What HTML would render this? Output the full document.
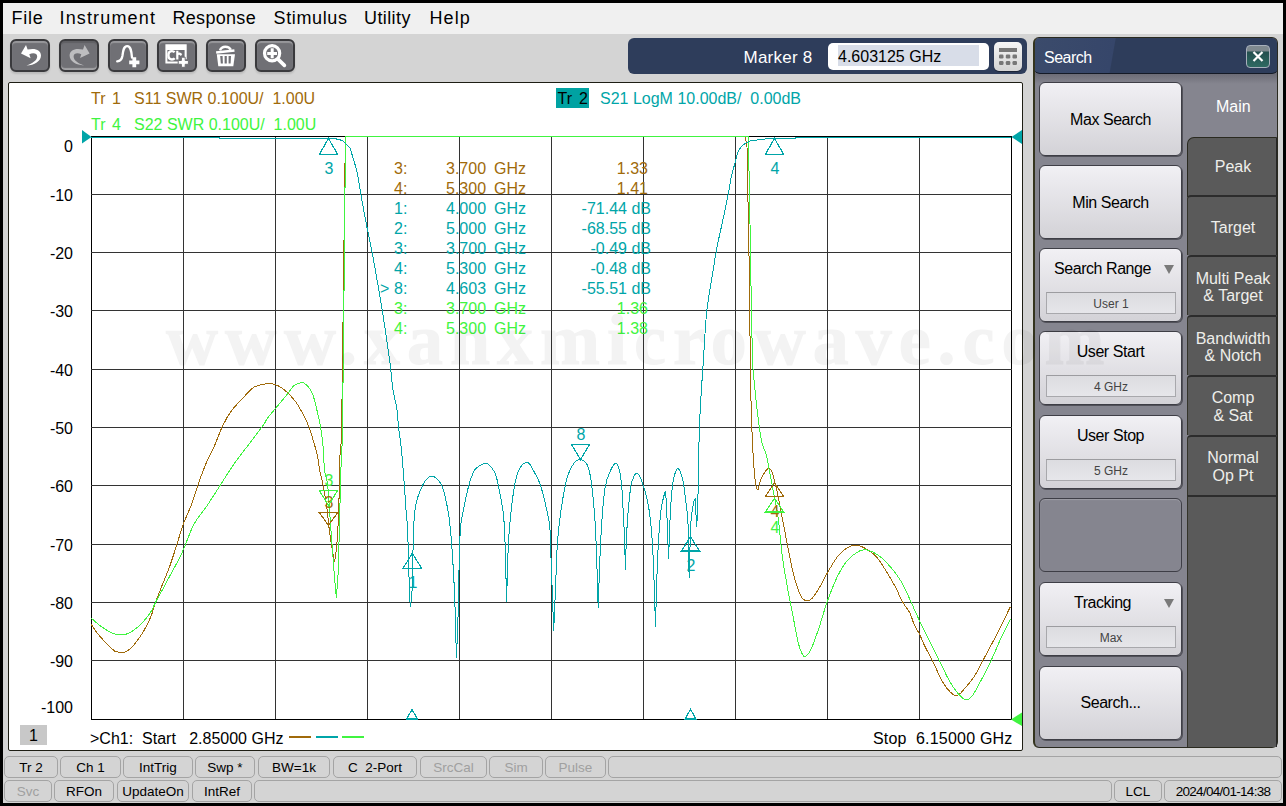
<!DOCTYPE html>
<html><head><meta charset="utf-8">
<style>
*{margin:0;padding:0;box-sizing:border-box}
html,body{width:1286px;height:806px;overflow:hidden;background:#000;font-family:"Liberation Sans",sans-serif}
.a{position:absolute;white-space:pre;line-height:1}
#win{position:absolute;left:3px;top:3px;width:1280px;height:800px;background:#d4d4d4}
#menu{position:absolute;left:3px;top:3px;width:1280px;height:31px;background:#f0f0f0}
.mi{font-size:18px;color:#000;top:9px}
.tb{position:absolute;top:39px;width:40px;height:33px;border-radius:6px;background:#707075;border:2px solid #3a3a3d;box-shadow:0 2px 2px rgba(0,0,0,0.12), inset 0 2px 1px rgba(255,255,255,0.28)}
.tb.dis{box-shadow:0 2px 2px rgba(0,0,0,0.12), inset 0 -2px 1px rgba(255,255,255,0.35), inset 0 2px 1px rgba(0,0,0,0.15)}

#chart{position:absolute;left:8px;top:82px;width:1015px;height:669px;background:#fff;border:1px solid #1e1e14;border-radius:2px}
.sb{position:absolute;height:22px;border:1px solid #a4a4a4;border-radius:5px;font-size:13.5px;text-align:center;line-height:21px;color:#000;white-space:pre}
.sb.dis{color:#a0a0a0}
#mk{position:absolute;left:628px;top:38px;width:399px;height:36px;background:#2e3d5b;border-radius:6px}
#sp{position:absolute;left:1033px;top:37px;width:245px;height:711px;border-radius:6px;background:linear-gradient(#6c6c76 36px,#85858f 46px);border:1px solid #2a2a20;border-left:2px solid #34341e;overflow:hidden}
#sptitle{position:absolute;left:-1px;top:0;width:244px;height:36px;border-radius:0 0 6px 6px;background:linear-gradient(100deg,#3b4b6b 0px,#36466a 80px,#2e3d5b 81px);border-bottom:1px solid #141a26}
.btn{position:absolute;left:1039px;width:143px;height:74px;border-radius:6px;background:linear-gradient(#f1f0f4,#d3d2d7);border:1px solid #3e3e46;box-shadow:1px 1px 0 rgba(40,40,48,.55);font-size:16px;color:#000}
.btn .t{position:absolute;left:0;width:141px;text-align:center;white-space:pre;line-height:1;letter-spacing:-0.45px}
.btn .sub{position:absolute;left:6px;top:43px;width:130px;height:22px;border:1px solid #a8a8ac;border-top-color:#9c9ca0;background:linear-gradient(#dcdce0,#e6e6ea);font-size:12px;color:#444;text-align:center;line-height:23px}
.btn .tri{position:absolute;left:124px;top:16px;width:0;height:0;border-left:5px solid transparent;border-right:5px solid transparent;border-top:9px solid #7a7a7a}
.tab{position:absolute;left:1187px;width:90px;height:60px;background:#5a5a5a;border-top:2px solid #2c2c2c;border-left:1px solid #34342a;border-right:1px solid #262626;border-radius:4px 0 0 0;color:#eeeeea;font-size:16px;line-height:17.5px}
.tt{position:absolute;left:0;width:90px;text-align:center;white-space:pre}
</style></head><body>
<div id="win"></div>
<div id="menu"></div>
<span class="a mi" style="left:11.5px;letter-spacing:0.75px">File</span>
<span class="a mi" style="left:59.5px;letter-spacing:1.15px">Instrument</span>
<span class="a mi" style="left:172.5px;letter-spacing:0.3px">Response</span>
<span class="a mi" style="left:273.5px;letter-spacing:0.64px">Stimulus</span>
<span class="a mi" style="left:364px;letter-spacing:0.4px">Utility</span>
<span class="a mi" style="left:429.5px;letter-spacing:1.1px">Help</span>

<!-- toolbar -->
<div class="tb" style="left:10px"><svg width="40" height="33" style="position:absolute;left:-2px;top:-2px"><path d="M16,6 L11,14.6 L20.6,19.2 L19.3,15.2 C23,13.6 27.2,14 27.2,17.6 C27.2,21.2 22.5,24.6 16.4,26.6 C24.5,26.4 31,22.2 31,16.6 C31,11 25,8.6 17.6,10.6 Z" fill="#ffffff"/></svg></div>
<div class="tb dis" style="left:59px"><svg width="40" height="33" style="position:absolute;left:-2px;top:-2px"><path d="M25.6,6 L30.6,14.4 L21,19.1 L22.3,15.2 C18.6,13.6 14.6,14 14.6,17.6 C14.6,21.2 19,24.6 25,26.4 C17,26.4 10.6,22.2 10.6,16.6 C10.6,11 16.6,8.6 24,10.6 Z" fill="#bdbdbf"/></svg></div>
<div class="tb" style="left:108px"><svg width="40" height="33" style="position:absolute;left:-2px;top:-2px"><path d="M9.2,22.4 C12.5,22.2 13.8,20.5 14.4,17 C15,12 15.6,7.2 19.2,7.2 C23,7.2 23.4,12.5 24,18.6" fill="none" stroke="#ffffff" stroke-width="2.3" stroke-linecap="round"/><path d="M24.4,18.2 h3.8 v3.3 h3.2 v3.8 h-3.2 v3 h-3.8 v-3 h-3.2 v-3.8 h3.2 Z" fill="#ffffff"/></svg></div>
<div class="tb" style="left:157px"><svg width="40" height="33" style="position:absolute;left:-2px;top:-2px"><path d="M8.4,5.3 H29.7 V20.2 H27.6 V11.1 H10.4 V22.6 H21 V24.4 H8.4 Z" fill="#ffffff"/><path d="M17.6,13.2 C16.9,12.4 16,12.1 15,12.1 C12.6,12.1 11.4,14 11.4,16.3 C11.4,18.7 12.6,20.5 15,20.5 C16.1,20.5 17,20.1 17.7,19.3" fill="none" stroke="#ffffff" stroke-width="2.4"/><path d="M20.3,11.8 V20.6 M20.3,16 C20.8,14.8 21.6,14.5 22.6,14.5 L24.6,16" fill="none" stroke="#ffffff" stroke-width="2.2"/><path d="M24.4,18.2 h3.8 v3.3 h3.2 v3.8 h-3.2 v3 h-3.8 v-3 h-3.2 v-3.8 h3.2 Z" fill="#ffffff" stroke="#707075" stroke-width="1"/></svg></div>
<div class="tb" style="left:206px"><svg width="40" height="33" style="position:absolute;left:-2px;top:-2px"><path d="M14,11.4 C14.9,8.9 16.8,7.7 19.3,7.7 C21.9,7.7 23.8,8.7 24.8,10.8" fill="none" stroke="#ffffff" stroke-width="2.5"/><path d="M10,12.2 L28.3,10.2 L28.6,12.8 L10.3,14.8 Z" fill="#ffffff"/><path d="M10.8,15.2 H29 L27.3,27.2 H12.3 Z" fill="#ffffff"/><path d="M14.2,17 H16.6 L16.9,24.6 H14.8 Z M18.6,17 H20.8 V24.6 H18.6 Z M22.6,17 H25 L24.6,24.6 H22.6 Z" fill="#707075"/></svg></div>
<div class="tb" style="left:255px"><svg width="40" height="33" style="position:absolute;left:-2px;top:-2px"><circle cx="17.1" cy="14.2" r="7.6" fill="none" stroke="#ffffff" stroke-width="3.2"/><path d="M12.2,13 H22 V15.9 H12.2 Z M15.7,9.2 H18.7 V19.3 H15.7 Z" fill="#ffffff"/><path d="M23.2,20.4 L29.4,26.4" stroke="#ffffff" stroke-width="3.6" stroke-linecap="round"/></svg></div>

<!-- marker panel -->
<div id="mk"></div>
<span class="a" style="left:743.5px;top:49px;font-size:17px;letter-spacing:0.25px;color:#fff">Marker 8</span>
<div class="a" style="left:828px;top:43px;width:161px;height:27px;background:#fff;border-radius:5px"></div>
<div class="a" style="left:838px;top:45px;width:141px;height:21px;background:#d8dde8"></div>
<span class="a" style="left:838px;top:48.5px;font-size:16px;color:#000">4.603125 GHz</span>
<div class="a" style="left:994px;top:42px;width:28px;height:29px;border-radius:5px;background:linear-gradient(#f6f6f6,#d4d4d4);box-shadow:0 1px 1px rgba(0,0,0,.45)">
<svg width="28" height="29" style="position:absolute;left:0;top:0"><rect x="5" y="6" width="18" height="4" fill="#777"/><g fill="#777"><rect x="5" y="12.5" width="4.5" height="4" rx="1.2"/><rect x="11.8" y="12.5" width="4.5" height="4" rx="1.2"/><rect x="18.5" y="12.5" width="4.5" height="4" rx="1.2"/><rect x="5" y="19" width="4.5" height="4" rx="1.2"/><rect x="11.8" y="19" width="4.5" height="4" rx="1.2"/><rect x="18.5" y="19" width="4.5" height="4" rx="1.2"/></g></svg></div>

<!-- chart panel -->
<div id="chart"></div>
<svg class="a" style="left:0;top:0" width="1286" height="806" font-family="Liberation Sans" font-size="16">
<line x1="91.5" y1="136" x2="91.5" y2="720" stroke="#000" stroke-width="1"/>
<line x1="183.5" y1="136" x2="183.5" y2="720" stroke="#333" stroke-width="1"/>
<line x1="275.5" y1="136" x2="275.5" y2="720" stroke="#333" stroke-width="1"/>
<line x1="367.5" y1="136" x2="367.5" y2="720" stroke="#333" stroke-width="1"/>
<line x1="459.5" y1="136" x2="459.5" y2="720" stroke="#333" stroke-width="1"/>
<line x1="551.5" y1="136" x2="551.5" y2="720" stroke="#333" stroke-width="1"/>
<line x1="643.5" y1="136" x2="643.5" y2="720" stroke="#333" stroke-width="1"/>
<line x1="735.5" y1="136" x2="735.5" y2="720" stroke="#333" stroke-width="1"/>
<line x1="827.5" y1="136" x2="827.5" y2="720" stroke="#333" stroke-width="1"/>
<line x1="919.5" y1="136" x2="919.5" y2="720" stroke="#333" stroke-width="1"/>
<line x1="1011.5" y1="136" x2="1011.5" y2="720" stroke="#000" stroke-width="1"/>
<line x1="91" y1="136.5" x2="1012" y2="136.5" stroke="#000" stroke-width="1"/>
<line x1="91" y1="194.5" x2="1012" y2="194.5" stroke="#333" stroke-width="1"/>
<line x1="91" y1="252.5" x2="1012" y2="252.5" stroke="#333" stroke-width="1"/>
<line x1="91" y1="310.5" x2="1012" y2="310.5" stroke="#333" stroke-width="1"/>
<line x1="91" y1="369.5" x2="1012" y2="369.5" stroke="#333" stroke-width="1"/>
<line x1="91" y1="427.5" x2="1012" y2="427.5" stroke="#333" stroke-width="1"/>
<line x1="91" y1="485.5" x2="1012" y2="485.5" stroke="#333" stroke-width="1"/>
<line x1="91" y1="544.5" x2="1012" y2="544.5" stroke="#333" stroke-width="1"/>
<line x1="91" y1="602.5" x2="1012" y2="602.5" stroke="#333" stroke-width="1"/>
<line x1="91" y1="660.5" x2="1012" y2="660.5" stroke="#333" stroke-width="1"/>
<line x1="91" y1="719.5" x2="1012" y2="719.5" stroke="#000" stroke-width="1"/>
<text x="73" y="152" text-anchor="end" fill="#000">0</text>
<text x="73" y="201" text-anchor="end" fill="#000">-10</text>
<text x="73" y="259" text-anchor="end" fill="#000">-20</text>
<text x="73" y="317" text-anchor="end" fill="#000">-30</text>
<text x="73" y="376" text-anchor="end" fill="#000">-40</text>
<text x="73" y="434" text-anchor="end" fill="#000">-50</text>
<text x="73" y="492" text-anchor="end" fill="#000">-60</text>
<text x="73" y="551" text-anchor="end" fill="#000">-70</text>
<text x="73" y="609" text-anchor="end" fill="#000">-80</text>
<text x="73" y="667" text-anchor="end" fill="#000">-90</text>
<text x="73" y="713" text-anchor="end" fill="#000">-100</text>
<text x="91" y="104" fill="#a06a0a">Tr</text><text x="112" y="104" fill="#a06a0a">1</text><text x="134" y="104" fill="#a06a0a" xml:space="preserve">S11 SWR 0.100U/  1.00U</text>
<text x="91" y="130" fill="#40f440">Tr</text><text x="112" y="130" fill="#40f440">4</text><text x="134" y="130" fill="#40f440" xml:space="preserve">S22 SWR 0.100U/  1.00U</text>
<rect x="556" y="88" width="33" height="20" fill="#00a2a2"/>
<text x="557.5" y="104" fill="#000">Tr</text><text x="579" y="104" fill="#000">2</text>
<text x="600" y="104" fill="#00a5a8" xml:space="preserve">S21 LogM 10.00dB/  0.00dB</text>
<text x="394" y="174" fill="#a06a0a">3:</text>
<text x="446" y="174" fill="#a06a0a">3.700</text>
<text x="494" y="174" fill="#a06a0a">GHz</text>
<text x="648" y="174" text-anchor="end" fill="#a06a0a">1.33</text>
<text x="394" y="194" fill="#a06a0a">4:</text>
<text x="446" y="194" fill="#a06a0a">5.300</text>
<text x="494" y="194" fill="#a06a0a">GHz</text>
<text x="648" y="194" text-anchor="end" fill="#a06a0a">1.41</text>
<text x="394" y="214" fill="#00a5a8">1:</text>
<text x="446" y="214" fill="#00a5a8">4.000</text>
<text x="494" y="214" fill="#00a5a8">GHz</text>
<text x="651" y="214" text-anchor="end" fill="#00a5a8">-71.44 dB</text>
<text x="394" y="234" fill="#00a5a8">2:</text>
<text x="446" y="234" fill="#00a5a8">5.000</text>
<text x="494" y="234" fill="#00a5a8">GHz</text>
<text x="651" y="234" text-anchor="end" fill="#00a5a8">-68.55 dB</text>
<text x="394" y="254" fill="#00a5a8">3:</text>
<text x="446" y="254" fill="#00a5a8">3.700</text>
<text x="494" y="254" fill="#00a5a8">GHz</text>
<text x="651" y="254" text-anchor="end" fill="#00a5a8">-0.49 dB</text>
<text x="394" y="274" fill="#00a5a8">4:</text>
<text x="446" y="274" fill="#00a5a8">5.300</text>
<text x="494" y="274" fill="#00a5a8">GHz</text>
<text x="651" y="274" text-anchor="end" fill="#00a5a8">-0.48 dB</text>
<text x="394" y="294" fill="#00a5a8">8:</text>
<text x="446" y="294" fill="#00a5a8">4.603</text>
<text x="494" y="294" fill="#00a5a8">GHz</text>
<text x="651" y="294" text-anchor="end" fill="#00a5a8">-55.51 dB</text>
<text x="394" y="314" fill="#40f440">3:</text>
<text x="446" y="314" fill="#40f440">3.700</text>
<text x="494" y="314" fill="#40f440">GHz</text>
<text x="648" y="314" text-anchor="end" fill="#40f440">1.36</text>
<text x="394" y="334" fill="#40f440">4:</text>
<text x="446" y="334" fill="#40f440">5.300</text>
<text x="494" y="334" fill="#40f440">GHz</text>
<text x="648" y="334" text-anchor="end" fill="#40f440">1.38</text>
<text x="380" y="294" fill="#00a5a8">&gt;</text>
<path d="M91.2,624.3 C91.2,624.3 94.4,629.3 96.2,631.7 C98.3,634.4 101.0,637.7 103.6,640.4 C106.7,643.6 112.3,649.5 114.8,651.1 C116.9,652.4 120.1,652.3 122.2,652.3 C123.9,652.3 125.8,652.0 127.2,651.1 C128.9,650.0 132.4,646.7 134.6,644.1 C137.2,641.0 140.7,636.0 143.3,631.7 C146.0,627.2 148.7,621.8 150.8,616.8 C152.8,612.0 153.9,606.9 155.7,602.0 C157.5,596.8 159.8,591.2 161.9,585.8 C164.2,580.0 167.1,573.5 169.4,567.2 C171.9,560.4 174.5,551.9 176.8,544.9 C178.9,538.3 180.6,531.5 183.0,525.0 C185.5,518.2 189.1,511.0 191.7,503.9 C194.4,496.7 196.4,489.0 199.1,481.6 C201.8,474.2 205.6,464.4 207.8,459.3 C209.6,455.0 212.1,451.0 214.0,446.8 C216.3,441.7 219.8,431.8 222.7,425.8 C225.2,420.6 228.3,415.2 231.4,410.9 C234.3,406.8 237.9,403.3 241.3,399.7 C245.0,395.8 250.3,389.7 253.7,387.3 C256.6,385.3 261.8,384.8 263.7,384.3 C265.3,383.9 266.9,383.3 268.6,383.3 C270.5,383.4 272.9,383.9 274.9,384.6 C277.0,385.3 279.2,386.1 281.1,387.4 C283.4,388.9 286.2,391.3 288.5,393.6 C291.0,396.1 293.8,399.2 296.0,402.3 C298.5,405.8 301.2,410.6 303.4,414.7 C305.5,418.7 307.4,422.9 309.0,427.1 C310.6,431.4 312.0,436.1 313.3,440.7 C314.8,445.6 316.6,451.9 317.7,456.8 C318.6,461.1 318.8,465.6 319.6,470.0 C320.5,474.6 322.0,479.4 322.9,484.2 C324.0,489.9 325.7,499.1 326.7,506.6 C327.8,514.4 328.5,523.7 329.4,530.8 C330.2,537.0 331.4,544.2 332.2,549.4 C332.9,553.7 334.5,562.4 334.5,562.4 C334.5,562.4 336.4,550.0 336.9,543.8 C337.5,536.3 338.4,519.0 338.8,506.6 C339.3,492.6 339.4,468.0 339.7,460.0 C340.0,453.3 341.5,440.0 341.5,440.0 C341.5,440.0 341.5,399.0 341.5,399.0 C341.5,399.0 342.5,399.0 342.5,399.0 C342.5,399.0 342.5,322.0 342.5,322.0 C342.5,322.0 343.5,322.0 343.5,322.0 C343.5,322.0 343.5,240.0 343.5,240.0 C343.5,240.0 344.5,240.0 344.5,240.0 C344.5,240.0 344.5,163.0 344.5,163.0 C344.5,163.0 345.5,163.0 345.5,163.0 C345.5,163.0 345.5,136.5 345.5,136.5 C345.5,136.5 745.0,136.5 745.0,136.5 C745.0,136.5 746.8,143.4 747.0,147.0 C747.2,151.3 747.4,177.2 747.7,190.0 C747.9,201.2 748.4,212.4 748.6,223.6 C748.8,237.0 749.1,260.9 749.3,279.5 C749.6,301.9 750.2,348.4 750.3,360.0 C750.4,369.7 750.5,379.3 750.7,389.0 C751.0,400.2 751.3,414.7 751.8,427.0 C752.3,438.9 753.0,453.8 753.6,462.7 C754.1,470.2 755.5,482.9 755.8,485.0 C756.1,486.7 757.0,490.9 757.9,489.8 C758.8,488.7 759.6,481.9 761.4,478.3 C763.1,474.7 766.6,469.4 768.4,468.4 C769.9,467.5 771.3,470.5 772.0,472.0 C772.9,473.8 774.1,479.0 775.0,482.5 C776.0,486.5 777.1,491.5 778.0,496.0 C779.0,500.9 780.0,506.8 781.0,512.0 C782.0,517.0 783.0,522.0 784.0,527.0 C785.1,532.5 786.2,538.9 787.4,544.8 C788.8,551.9 790.8,562.7 792.4,569.7 C793.8,575.5 795.7,582.4 797.3,587.0 C798.6,590.9 801.0,596.4 802.3,598.2 C803.4,599.7 805.6,600.7 807.3,600.7 C808.9,600.7 811.0,599.6 812.2,598.2 C813.7,596.6 817.4,590.9 819.7,587.0 C822.2,582.9 824.5,577.9 827.1,573.4 C830.0,568.4 833.8,561.5 837.1,557.2 C839.9,553.6 843.7,549.8 847.0,547.8 C849.9,546.0 853.7,545.0 857.0,545.3 C860.3,545.5 863.8,547.5 866.9,549.3 C870.2,551.3 874.0,554.0 876.8,557.2 C880.1,561.0 883.6,567.0 886.7,572.1 C890.0,577.5 895.2,586.6 896.7,589.5 C898.0,591.9 898.8,594.5 900.0,596.9 C901.2,599.4 902.6,602.0 904.1,604.4 C905.8,607.1 908.3,609.9 909.9,613.0 C911.6,616.3 912.4,620.6 914.1,624.3 C915.8,628.0 918.1,631.4 919.9,635.0 C921.7,638.7 923.1,642.8 925.0,646.6 C927.1,650.8 930.0,655.6 932.3,660.2 C935.0,665.7 939.0,675.8 942.2,681.3 C944.9,685.9 950.2,692.1 952.1,693.7 C953.7,695.1 956.3,695.7 958.3,694.9 C960.4,694.1 962.6,690.9 964.5,688.7 C966.8,686.0 971.5,680.8 974.4,676.3 C977.7,671.1 981.1,663.9 984.4,657.7 C987.7,651.5 991.1,645.3 994.3,639.1 C997.6,632.7 1001.7,624.3 1004.2,619.3 C1006.3,615.1 1010.4,606.8 1010.4,606.8" fill="none" stroke="#a06a0a" stroke-width="1" shape-rendering="crispEdges"/>
<path d="M91.2,618.1 C91.2,618.1 97.0,623.3 99.9,625.5 C102.7,627.6 105.9,629.8 108.6,631.2 C110.9,632.5 113.4,633.7 116.0,634.2 C118.9,634.7 123.0,634.8 125.9,634.2 C128.6,633.6 131.1,632.1 133.4,630.5 C136.1,628.6 139.5,625.8 142.1,623.0 C145.0,619.9 148.5,615.4 150.8,611.9 C152.8,608.8 154.0,605.3 155.7,602.0 C157.8,598.1 160.7,592.9 163.2,588.3 C165.9,583.3 169.1,577.2 171.8,572.2 C174.3,567.6 177.2,562.6 179.3,558.5 C181.1,554.9 182.7,551.1 184.3,547.4 C186.2,542.9 190.5,530.6 194.2,523.8 C197.6,517.5 202.6,512.3 206.6,506.4 C210.9,500.0 215.7,492.3 220.2,485.3 C224.8,478.3 229.1,471.0 233.9,464.2 C238.6,457.4 243.8,451.0 248.8,444.4 C253.8,437.8 262.0,426.8 263.7,424.5 C265.1,422.6 266.0,420.3 267.4,418.4 C269.1,416.1 272.4,412.2 274.9,409.1 C277.8,405.6 281.7,401.1 284.8,397.3 C287.8,393.6 291.5,388.0 293.5,386.1 C295.2,384.5 298.1,383.5 299.7,383.0 C301.1,382.6 302.8,382.3 304.0,383.0 C305.5,383.8 308.1,386.5 309.6,388.6 C311.2,390.8 312.4,393.4 313.3,396.0 C314.3,399.1 316.4,408.0 317.7,413.4 C318.8,418.3 320.0,423.3 320.8,428.3 C321.7,434.1 322.7,441.5 323.3,448.2 C323.9,455.1 323.8,464.2 324.5,470.0 C325.1,474.8 327.1,479.4 327.6,484.2 C328.2,490.0 330.2,519.9 331.3,534.5 C332.2,546.9 333.3,561.3 334.1,571.7 C334.8,580.4 336.3,597.8 336.3,597.8 C336.3,597.8 337.8,580.4 338.2,571.7 C338.6,561.2 339.2,534.5 339.7,515.9 C340.2,497.3 340.9,468.0 341.2,460.0 C341.4,453.3 342.5,440.0 342.5,440.0 C342.5,440.0 342.5,382.0 342.5,382.0 C342.5,382.0 343.5,382.0 343.5,382.0 C343.5,382.0 343.5,290.0 343.5,290.0 C343.5,290.0 344.5,290.0 344.5,290.0 C344.5,290.0 344.5,187.0 344.5,187.0 C344.5,187.0 345.5,187.0 345.5,187.0 C345.5,187.0 345.5,136.5 345.5,136.5 C345.5,136.5 748.5,136.5 748.5,136.5 C748.5,136.5 749.1,176.6 749.3,190.0 C749.5,201.2 749.8,212.4 750.0,223.6 C750.2,237.0 750.6,260.9 750.9,279.5 C751.3,301.9 752.1,349.3 752.5,360.0 C752.8,369.0 753.8,377.9 754.7,386.8 C755.6,396.5 757.0,409.1 758.1,418.0 C759.0,425.5 760.2,434.9 761.4,440.4 C762.4,445.0 765.2,451.4 765.9,453.8 C766.5,455.8 767.0,457.9 767.4,460.0 C767.9,462.5 769.1,469.3 770.0,474.0 C770.9,478.7 771.9,484.0 772.7,488.0 C773.3,491.3 773.9,494.7 774.6,498.0 C775.3,501.7 776.4,506.0 777.0,510.0 C777.8,514.8 778.6,521.3 779.2,527.0 C780.0,533.8 781.0,547.2 782.4,557.2 C784.0,568.5 786.9,584.5 788.7,594.5 C790.2,602.8 792.0,611.0 793.6,619.3 C795.2,627.6 797.1,639.0 798.6,644.2 C799.9,648.6 802.2,655.8 804.3,656.6 C806.4,657.4 809.5,652.1 811.0,649.1 C812.9,645.5 816.2,636.0 818.5,629.3 C821.2,621.4 824.0,610.7 827.1,602.0 C830.1,593.6 833.8,583.9 837.1,577.1 C839.9,571.4 843.3,565.4 847.0,561.0 C850.4,557.0 856.3,552.6 859.4,551.0 C862.0,549.7 865.3,549.6 868.1,550.3 C871.4,551.1 876.0,553.5 879.3,556.0 C883.2,559.0 888.0,564.0 891.7,568.4 C895.4,572.7 898.7,577.2 901.6,582.1 C904.6,587.3 907.2,593.6 909.9,599.4 C912.9,606.0 916.6,614.7 919.9,621.7 C923.1,628.4 926.5,635.0 929.8,641.6 C933.1,648.2 936.4,654.8 939.7,661.4 C943.0,668.0 946.6,676.0 949.6,681.3 C952.1,685.7 955.7,690.8 958.3,693.7 C960.4,696.1 963.5,699.5 965.8,699.9 C968.1,700.3 970.5,698.1 972.0,696.2 C973.8,693.9 978.8,684.7 981.9,678.8 C985.2,672.6 988.7,665.7 991.8,659.0 C995.1,652.0 998.6,643.2 1001.7,636.6 C1004.4,630.8 1010.4,619.3 1010.4,619.3" fill="none" stroke="#40f440" stroke-width="1" shape-rendering="crispEdges"/>
<path d="M91.0,137.5 C91.0,137.5 219.0,137.5 219.0,137.5 C219.0,137.5 219.0,138.5 219.0,138.5 C219.0,138.5 335.0,138.5 335.0,138.5 C335.0,138.5 338.0,139.5 338.0,139.5 C338.0,139.5 340.5,139.5 340.5,139.5 C340.5,139.5 341.0,140.5 341.0,140.5 C341.0,140.5 342.5,140.5 342.5,140.5 C342.5,140.5 344.2,142.2 345.0,143.0 C345.7,143.7 346.3,144.3 347.0,145.0 C347.8,145.8 349.4,146.7 350.0,148.0 C350.7,149.5 352.0,154.7 353.0,158.0 C354.2,162.0 356.0,167.3 357.0,172.0 C358.2,177.7 359.8,188.3 361.0,195.0 C362.0,200.7 363.0,206.3 364.0,212.0 C365.1,217.7 366.2,223.3 367.3,229.0 C368.7,235.8 371.0,246.3 372.6,255.0 C374.5,265.4 378.9,289.7 381.7,307.0 C384.5,324.3 387.8,346.6 389.5,359.0 C390.9,369.3 391.9,382.5 393.0,390.0 C393.9,396.3 395.9,402.4 396.8,408.6 C397.7,414.8 397.9,421.0 398.6,427.2 C399.4,434.0 400.6,442.1 401.4,449.6 C402.3,458.6 403.4,472.9 404.2,483.1 C404.9,492.4 405.5,503.4 406.1,511.0 C406.6,517.3 407.4,523.6 407.7,530.0 C408.0,537.6 409.3,590.2 409.5,595.0 C409.6,599.0 410.5,607.0 410.5,607.0 C410.5,607.0 412.0,592.9 412.3,585.8 C412.7,577.3 412.8,552.1 413.3,539.3 C413.7,528.6 413.8,516.4 415.4,507.3 C416.7,499.6 420.4,489.5 422.8,485.0 C424.8,481.2 428.7,476.0 431.8,476.0 C434.9,476.0 439.5,481.1 441.5,485.0 C443.9,489.7 445.6,498.6 447.0,505.5 C448.5,513.0 449.8,521.8 450.5,530.0 C451.4,539.9 453.3,567.2 454.2,585.8 C455.2,607.1 456.4,658.0 456.4,658.0 C456.4,658.0 457.5,634.7 457.9,623.0 C458.3,609.7 458.4,593.3 458.8,578.4 C459.2,562.9 459.9,536.3 460.3,530.0 C460.6,524.8 461.5,519.6 462.5,514.4 C463.7,508.2 466.9,492.5 468.7,485.9 C470.2,480.4 472.5,473.4 474.9,469.8 C476.9,466.8 482.3,464.3 483.6,463.6 C484.7,463.0 486.3,462.8 487.3,463.6 C488.5,464.5 493.0,468.8 494.7,472.2 C496.5,475.9 497.4,481.3 498.4,485.9 C499.5,491.5 502.3,504.8 503.4,514.4 C504.5,524.1 504.7,534.2 505.1,544.1 C505.5,556.0 506.6,602.4 506.6,602.4 C506.6,602.4 507.8,556.0 508.4,544.1 C508.9,534.2 509.8,524.1 510.8,514.4 C511.8,504.9 513.2,493.0 514.5,485.9 C515.6,480.0 518.0,471.7 519.5,468.5 C520.8,465.9 524.3,463.0 525.7,462.3 C526.9,461.7 529.4,463.6 529.4,463.6 C529.4,463.6 536.7,475.7 539.3,482.2 C542.0,489.0 543.8,497.1 545.5,504.5 C547.2,511.9 549.1,519.3 549.8,526.8 C550.7,535.8 550.7,551.6 551.2,564.0 C551.8,578.9 553.7,630.9 553.7,630.9 C553.7,630.9 554.9,602.8 555.5,588.8 C556.1,574.8 556.4,559.0 557.2,546.6 C557.9,535.8 558.9,525.1 560.4,514.4 C562.0,503.2 564.8,486.5 566.6,479.7 C568.1,474.1 571.8,466.3 573.6,463.7 C575.1,461.5 578.2,459.4 580.5,459.6 C582.8,459.8 586.1,462.4 587.3,465.0 C588.8,468.1 590.6,476.8 591.4,482.8 C592.3,490.0 594.7,513.7 595.5,529.2 C596.5,547.8 598.2,608.3 598.2,608.3 C598.2,608.3 599.8,557.1 600.9,537.4 C601.8,521.0 603.9,495.5 605.0,488.2 C605.9,482.1 608.9,473.8 610.5,470.5 C611.8,467.7 615.0,461.6 616.8,463.7 C618.6,465.8 620.7,476.3 621.4,482.8 C622.3,490.6 623.4,514.7 624.1,529.2 C624.7,542.8 625.5,570.1 625.5,570.1 C625.5,570.1 626.0,542.8 626.9,529.2 C627.8,515.1 630.1,490.8 631.0,485.5 C631.7,481.1 634.6,473.9 636.4,473.2 C638.2,472.5 640.8,478.3 641.9,481.4 C643.2,485.1 647.3,498.5 648.7,507.3 C650.4,517.9 652.0,536.4 652.8,551.0 C653.8,568.5 655.5,627.4 655.5,627.4 C655.5,627.4 656.8,575.1 657.7,556.5 C658.4,541.0 660.1,517.7 661.0,510.1 C661.7,503.8 665.1,491.5 665.1,491.5 C665.1,491.5 666.2,498.4 666.4,501.9 C666.6,506.1 668.6,559.2 668.6,559.2 C668.6,559.2 669.8,522.2 670.5,510.1 C671.1,500.0 672.4,484.8 673.3,480.0 C674.0,476.0 676.3,468.6 677.9,468.6 C679.5,468.6 681.9,476.0 682.8,480.0 C683.9,484.9 686.0,502.5 686.9,510.1 C687.6,516.4 688.1,522.8 688.3,529.2 C688.5,536.9 689.1,578.3 689.1,578.3 C689.1,578.3 690.5,528.7 691.0,521.0 C691.4,514.6 693.5,503.1 693.7,501.9 C693.9,500.9 695.1,499.2 695.1,499.2 C695.1,499.2 696.7,527.4 696.7,527.4 C696.7,527.4 697.5,511.1 697.8,502.9 C698.1,493.6 698.3,482.0 698.5,471.6 C698.8,459.1 698.9,440.0 699.4,427.0 C699.8,415.8 700.5,404.7 701.2,393.5 C701.9,382.3 702.6,371.2 703.4,360.0 C704.3,346.6 705.3,325.0 706.8,310.8 C708.1,298.8 710.7,285.4 712.4,275.0 C713.8,266.1 715.1,257.1 716.8,248.2 C718.7,238.5 721.5,226.5 723.6,216.8 C725.5,207.9 728.2,194.8 729.1,190.0 C729.9,186.0 730.1,182.0 731.0,178.0 C732.0,173.5 733.8,167.3 735.0,163.0 C736.0,159.3 736.9,154.7 738.0,152.0 C738.9,149.8 740.7,147.5 742.0,146.0 C743.1,144.8 744.7,143.8 746.0,143.0 C747.3,142.2 748.6,141.4 750.0,141.0 C751.7,140.5 754.7,140.3 757.0,140.0 C759.8,139.6 770.0,138.5 770.0,138.5 C770.0,138.5 795.0,138.5 795.0,138.5 C795.0,138.5 795.0,137.5 795.0,137.5 C795.0,137.5 1011.0,137.5 1011.0,137.5" fill="none" stroke="#00a5a8" stroke-width="1" shape-rendering="crispEdges"/>
<path d="M328.5,138.5 L319.3,154.5 L337.7,154.5 Z" fill="none" stroke="#00a5a8" stroke-width="1.2" shape-rendering="crispEdges"/>
<text x="329" y="173.5" text-anchor="middle" fill="#00a5a8" font-size="16">3</text>
<path d="M774.5,138.5 L765.3,154.5 L783.7,154.5 Z" fill="none" stroke="#00a5a8" stroke-width="1.2" shape-rendering="crispEdges"/>
<text x="775" y="174" text-anchor="middle" fill="#00a5a8" font-size="16">4</text>
<path d="M412.3,553.3 L402.90000000000003,568.5 L421.7,568.5 Z" fill="none" stroke="#00a5a8" stroke-width="1.2" shape-rendering="crispEdges"/>
<text x="413" y="588" text-anchor="middle" fill="#00a5a8" font-size="16">1</text>
<path d="M690.5,536.8 L681.4,551 L699.6,551 Z" fill="none" stroke="#00a5a8" stroke-width="1.2" shape-rendering="crispEdges"/>
<text x="691" y="571" text-anchor="middle" fill="#00a5a8" font-size="16">2</text>
<path d="M571.5,444.6 L589.5,444.6 L580.5,459.6 Z" fill="none" stroke="#00a5a8" stroke-width="1.2" shape-rendering="crispEdges"/>
<text x="581" y="440" text-anchor="middle" fill="#00a5a8" font-size="16">8</text>
<path d="M319.2,512.7 L337.8,512.7 L328.5,525.2 Z" fill="none" stroke="#a06a0a" stroke-width="1.2" shape-rendering="crispEdges"/>
<text x="329" y="508" text-anchor="middle" fill="#a06a0a" font-size="16">3</text>
<path d="M319.3,490.4 L337.7,490.4 L328.5,505.6 Z" fill="none" stroke="#40f440" stroke-width="1.2" shape-rendering="crispEdges"/>
<text x="329" y="486" text-anchor="middle" fill="#40f440" font-size="16">3</text>
<path d="M774.5,482.8 L765.3,496.5 L783.7,496.5 Z" fill="none" stroke="#a06a0a" stroke-width="1.2" shape-rendering="crispEdges"/>
<text x="775" y="516.5" text-anchor="middle" fill="#a06a0a" font-size="16">4</text>
<path d="M774.5,498.2 L765.3,512.1 L783.7,512.1 Z" fill="none" stroke="#40f440" stroke-width="1.2" shape-rendering="crispEdges"/>
<text x="775" y="532.5" text-anchor="middle" fill="#40f440" font-size="16">4</text>
<path d="M412,709.5 L406.5,719 L417.5,719 Z" fill="none" stroke="#00a5a8" stroke-width="1.2" shape-rendering="crispEdges"/>
<path d="M690.5,709.5 L685.0,719 L696.0,719 Z" fill="none" stroke="#00a5a8" stroke-width="1.2" shape-rendering="crispEdges"/>
<path d="M82,130 L91.5,137 L82,143.5 Z" fill="#00a5a8"/>
<path d="M1022,130 L1011.5,137 L1022,144 Z" fill="#00a5a8"/>
<path d="M1022,712.5 L1011,719.5 L1022,726 Z" fill="#40f440"/>
<rect x="20" y="725" width="27" height="20" fill="#c8c8c8"/>
<text x="33.5" y="741" text-anchor="middle" fill="#000">1</text>
<text x="90" y="743.5" fill="#000" xml:space="preserve">&gt;Ch1:  Start   2.85000 GHz</text>
<rect x="289" y="736" width="22" height="2" fill="#a06a0a"/>
<rect x="316" y="736" width="22" height="2" fill="#00a5a8"/>
<rect x="342" y="736" width="22" height="2" fill="#40f440"/>
<text x="873" y="743.5" fill="#000" letter-spacing="0.2" xml:space="preserve">Stop  6.15000 GHz</text>
</svg>

<!-- search panel -->
<div id="sp"><div id="sptitle"></div></div>
<span class="a" style="left:1044px;top:50px;font-size:16px;letter-spacing:-0.5px;color:#fff">Search</span>
<div class="a" style="left:1246px;top:45px;width:24px;height:23px;border-radius:4px;border:1px solid #a8b0bc;background:linear-gradient(#7f898f 0%,#7f898f 22%,#24504f 30%,#2f6a62 100%)"></div>
<svg class="a" style="left:1246px;top:45px" width="24" height="23"><path d="M7.5,7 L16.5,16 M16.5,7 L7.5,16" stroke="#fff" stroke-width="2.2"/></svg>

<div class="tab" style="top:137px;border-top:1px solid #2a2a20;border-left:1px solid #2a2a20;border-radius:7px 0 0 0"><span class="tt" style="top:20px">Peak</span></div>
<div class="tab" style="top:195px"><span class="tt" style="top:21.5px">Target</span></div>
<div class="tab" style="top:255px"><span class="tt" style="top:12.5px">Multi Peak
& Target</span></div>
<div class="tab" style="top:315px"><span class="tt" style="top:12.5px">Bandwidth
& Notch</span></div>
<div class="tab" style="top:375px"><span class="tt" style="top:12px">Comp
& Sat</span></div>
<div class="tab" style="top:435px"><span class="tt" style="top:12px">Normal
Op Pt</span></div>
<div class="tab" style="top:495px;height:252px;border-radius:0 0 0 0"></div>
<span class="a" style="left:1216px;top:99px;font-size:16px;color:#fff">Main</span>

<div class="btn" style="top:82px"><span class="t" style="top:29px">Max Search</span></div>
<div class="btn" style="top:165px"><span class="t" style="top:29px">Min Search</span></div>
<div class="btn" style="top:248px"><span class="t" style="top:12px;left:-8px">Search Range</span><div class="tri"></div><div class="sub">User 1</div></div>
<div class="btn" style="top:331px"><span class="t" style="top:12px">User Start</span><div class="sub">4 GHz</div></div>
<div class="btn" style="top:415px"><span class="t" style="top:12px">User Stop</span><div class="sub">5 GHz</div></div>
<div class="btn" style="top:498px;background:#85858f;box-shadow:inset 0 1px 1px rgba(255,255,255,.2)"></div>
<div class="btn" style="top:582px"><span class="t" style="top:12px;left:-8px">Tracking</span><div class="tri"></div><div class="sub">Max</div></div>
<div class="btn" style="top:666px"><span class="t" style="top:28px">Search...</span></div>

<!-- status bar -->
<div class="sb" style="left:4px;top:756px;width:54px">Tr 2</div>
<div class="sb" style="left:60px;top:756px;width:61px">Ch 1</div>
<div class="sb" style="left:123px;top:756px;width:70px">IntTrig</div>
<div class="sb" style="left:195px;top:756px;width:60px">Swp *</div>
<div class="sb" style="left:258px;top:756px;width:72px">BW=1k</div>
<div class="sb" style="left:333px;top:756px;width:84px">C  2-Port</div>
<div class="sb dis" style="left:420px;top:756px;width:67px">SrcCal</div>
<div class="sb dis" style="left:489px;top:756px;width:54px">Sim</div>
<div class="sb dis" style="left:545px;top:756px;width:61px">Pulse</div>
<div class="sb" style="left:608px;top:756px;width:674px"></div>
<div class="sb dis" style="left:4px;top:780px;width:48px">Svc</div>
<div class="sb" style="left:54px;top:780px;width:60px">RFOn</div>
<div class="sb" style="left:117px;top:780px;width:72px">UpdateOn</div>
<div class="sb" style="left:192px;top:780px;width:60px">IntRef</div>
<div class="sb" style="left:254px;top:780px;width:858px"></div>
<div class="sb" style="left:1114px;top:780px;width:48px">LCL</div>
<div class="sb" style="left:1164px;top:780px;width:118px"><span style="letter-spacing:-0.7px">2024/04/01-14:38</span></div>
<div class="a" style="left:166px;top:303.5px;font-family:'Liberation Serif';font-weight:bold;font-size:72px;letter-spacing:7px;color:#000;-webkit-text-stroke:1px #000;opacity:0.045">www.xanxmicrowave.com</div>
</body></html>
